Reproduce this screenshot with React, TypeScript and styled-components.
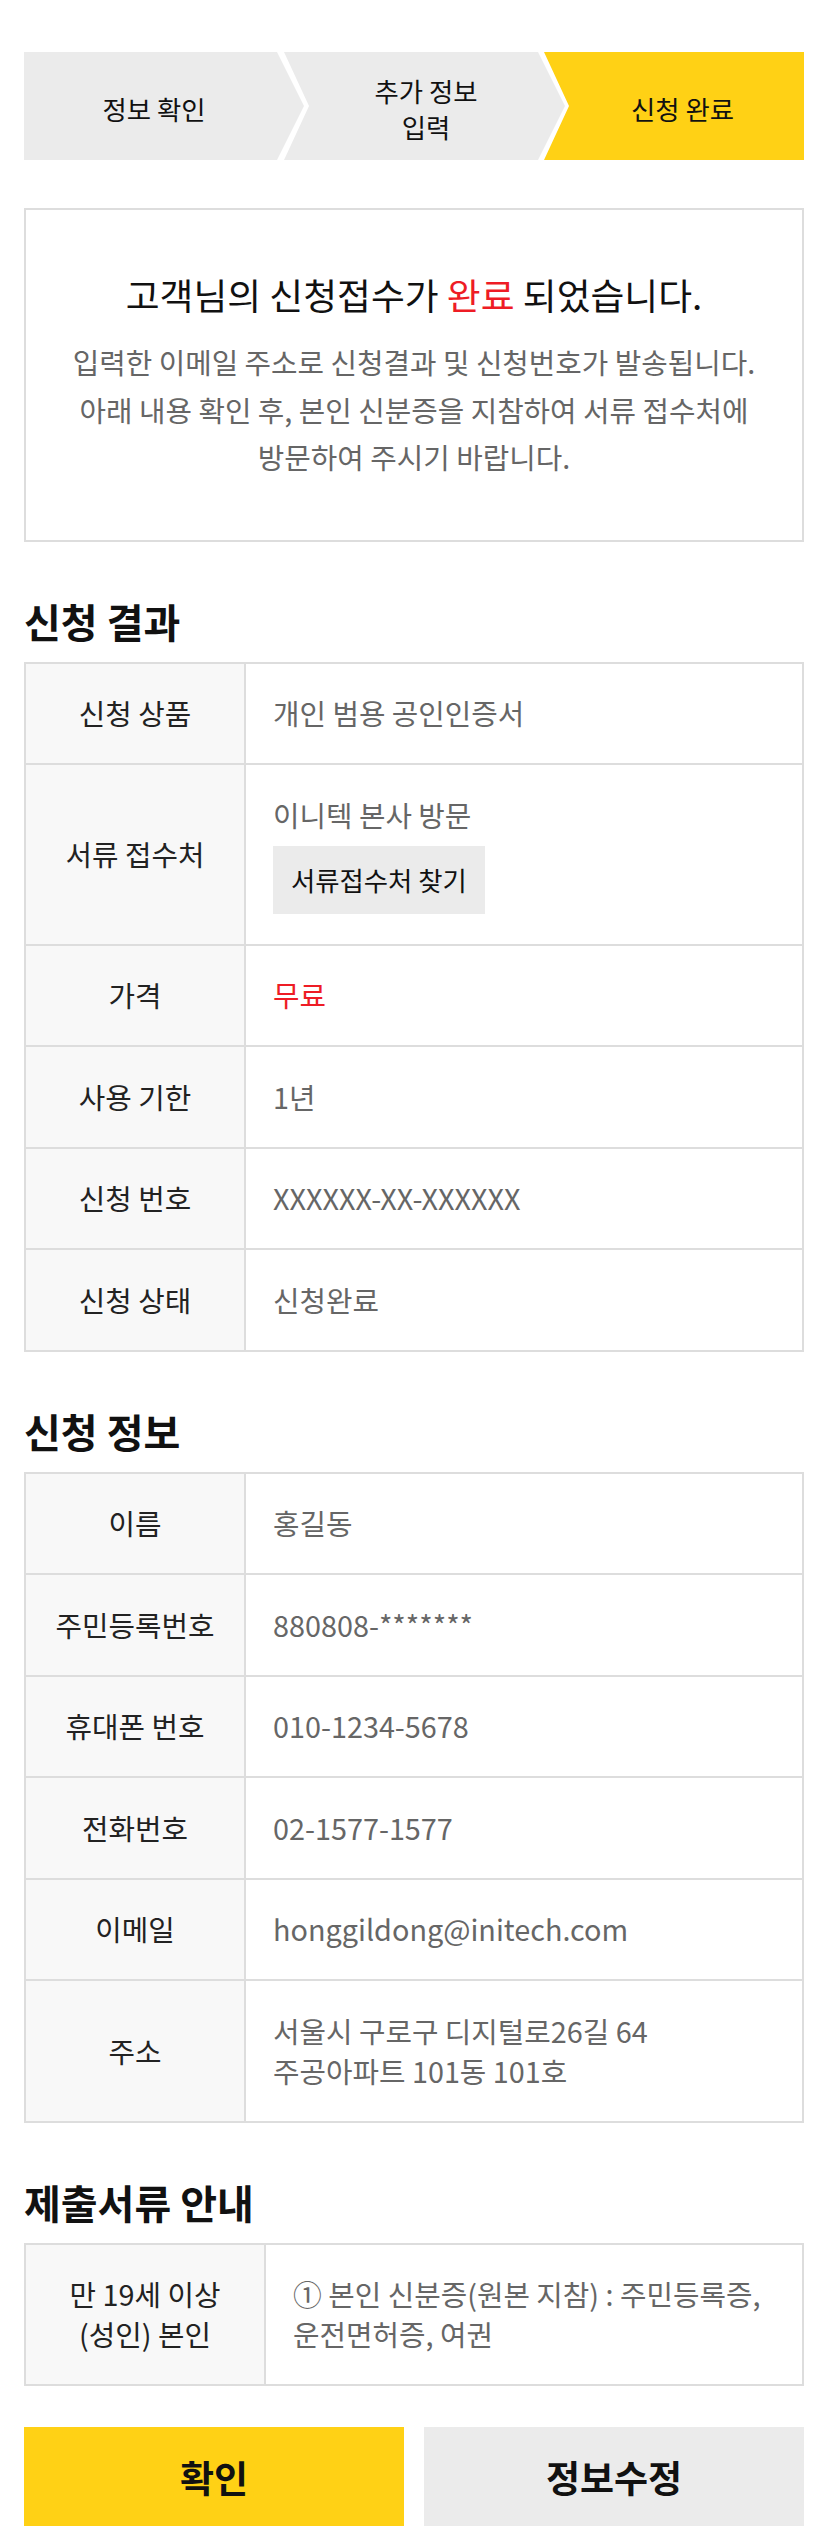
import React from "react";
import styled, { createGlobalStyle, css } from "styled-components";

const GlobalStyle = createGlobalStyle`
  html, body {
    margin: 0;
    padding: 0;
    background: #ffffff;
  }
  body {
    font-family: "Noto Sans CJK KR", "Noto Sans", sans-serif;
    color: #111;
  }
  * { box-sizing: border-box; }
`;

const Page = styled.main`
  width: 828px;
  padding: 52px 24px 0;
`;

/* ---------- step indicator ---------- */
const Steps = styled.ol`
  display: flex;
  height: 108px;
  margin: 0;
  padding: 0;
  list-style: none;
`;

type StepKind = "first" | "middle" | "last";

const clipFor = (kind: StepKind) => {
  if (kind === "first")
    return "polygon(0 0, 253px 0, 280px 50%, 253px 100%, 0 100%)";
  if (kind === "middle")
    return "polygon(0 0, 254px 0, 281px 50%, 254px 100%, 0 100%, 25px 50%)";
  return "polygon(0 0, 100% 0, 100% 100%, 0 100%, 25px 50%)";
};

const stepPadLeft: Record<StepKind, string> = {
  first: "0",
  middle: "24px",
  last: "17px",
};

const Step = styled.li<{ $kind: StepKind; $active?: boolean }>`
  flex: 0 0 ${(p) => (p.$kind === "last" ? "260px" : "281px")};
  margin-right: ${(p) => (p.$kind === "last" ? "0" : "-21px")};
  display: flex;
  align-items: center;
  justify-content: center;
  padding: 6px ${(p) => (p.$kind === "last" ? "0" : "21px")} 0
    ${(p) => stepPadLeft[p.$kind]};
  background: ${(p) => (p.$active ? "#ffd115" : "#ebebeb")};
  clip-path: ${(p) => clipFor(p.$kind)};
  font-size: 26.4px;
  line-height: 36px;
  color: #111;
  text-align: center;
`;

/* ---------- completion message ---------- */
const MessageBox = styled.section`
  margin-top: 48px;
  border: 2px solid #dddddd;
  padding: 60px 16px 59px;
  text-align: center;
`;

const MessageTitle = styled.h1`
  margin: 0 0 20px;
  font-size: 36.8px;
  line-height: 48px;
  font-weight: 400;
  color: #111;
`;

const Red = styled.span`
  color: #ee1c25;
`;

const MessageText = styled.p`
  margin: 0;
  font-size: 28.8px;
  line-height: 47.5px;
  color: #666;
`;

/* ---------- sections & tables ---------- */
const Section = styled.section`
  margin-top: 54px;
`;

const SectionTitle = styled.h2`
  margin: 0 0 16px;
  font-size: 40px;
  line-height: 50px;
  font-weight: 700;
  color: #111;
`;

const InfoTable = styled.div`
  border-top: 2px solid #dddddd;
  border-left: 2px solid #dddddd;
`;

const Row = styled.div<{ $labelWidth: number }>`
  display: grid;
  grid-template-columns: ${(p) => p.$labelWidth}px 1fr;
`;

const cellBase = css`
  border-right: 2px solid #dddddd;
  border-bottom: 2px solid #dddddd;
  padding-top: 29.75px;
  padding-bottom: 29.75px;
  font-size: 28.8px;
  line-height: 40px;
`;

const Label = styled.div`
  ${cellBase};
  display: flex;
  align-items: center;
  justify-content: center;
  padding-left: 6px;
  padding-right: 6px;
  background: #f8f8f8;
  color: #222;
  text-align: center;
`;

const Value = styled.div<{ $tone?: "red" }>`
  ${cellBase};
  display: flex;
  flex-direction: column;
  justify-content: center;
  align-items: flex-start;
  padding-left: 27px;
  padding-right: 12px;
  color: ${(p) => (p.$tone === "red" ? "#ee1c25" : "#666")};
`;

const FindButton = styled.button`
  margin-top: 11px;
  height: 68px;
  padding: 0 18px;
  border: none;
  background: #ebebeb;
  font-family: inherit;
  font-size: 26.4px;
  color: #111;
  cursor: pointer;
`;

/* ---------- bottom actions ---------- */
const Actions = styled.div`
  display: grid;
  grid-template-columns: 1fr 1fr;
  gap: 20px;
  margin-top: 41px;
`;

const ActionButton = styled.button<{ $primary?: boolean }>`
  height: 100px;
  border: none;
  background: ${(p) => (p.$primary ? "#ffd115" : "#ebebeb")};
  font-family: inherit;
  font-size: 37px;
  font-weight: 700;
  color: #111;
  cursor: pointer;
`;

type Item = { label: React.ReactNode; value: React.ReactNode; tone?: "red" };

const resultItems: Item[] = [
  { label: "신청 상품", value: "개인 범용 공인인증서" },
  {
    label: "서류 접수처",
    value: (
      <>
        <span>이니텍 본사 방문</span>
        <FindButton type="button">서류접수처 찾기</FindButton>
      </>
    ),
  },
  { label: "가격", value: "무료", tone: "red" },
  { label: "사용 기한", value: "1년" },
  { label: "신청 번호", value: "XXXXXX-XX-XXXXXX" },
  { label: "신청 상태", value: "신청완료" },
];

const infoItems: Item[] = [
  { label: "이름", value: "홍길동" },
  { label: "주민등록번호", value: "880808-*******" },
  { label: "휴대폰 번호", value: "010-1234-5678" },
  { label: "전화번호", value: "02-1577-1577" },
  { label: "이메일", value: "honggildong@initech.com" },
  {
    label: "주소",
    value: (
      <span>
        서울시 구로구 디지털로26길 64
        <br />
        주공아파트 101동 101호
      </span>
    ),
  },
];

const docItems: Item[] = [
  {
    label: (
      <span>
        만 19세 이상
        <br />
        (성인) 본인
      </span>
    ),
    value: (
      <span>
        ① 본인 신분증(원본 지참) : 주민등록증,
        <br />
        운전면허증, 여권
      </span>
    ),
  },
];

const Table = ({ items, labelWidth }: { items: Item[]; labelWidth: number }) => (
  <InfoTable>
    {items.map((it, i) => (
      <Row key={i} $labelWidth={labelWidth}>
        <Label>{it.label}</Label>
        <Value $tone={it.tone}>{it.value}</Value>
      </Row>
    ))}
  </InfoTable>
);

export default function App() {
  return (
    <>
      <GlobalStyle />
      <Page>
        <Steps>
          <Step $kind="first">정보 확인</Step>
          <Step $kind="middle">
            추가 정보
            <br />
            입력
          </Step>
          <Step $kind="last" $active>
            신청 완료
          </Step>
        </Steps>

        <MessageBox>
          <MessageTitle>
            고객님의 신청접수가 <Red>완료</Red> 되었습니다.
          </MessageTitle>
          <MessageText>
            입력한 이메일 주소로 신청결과 및 신청번호가 발송됩니다.
            <br />
            아래 내용 확인 후, 본인 신분증을 지참하여 서류 접수처에
            <br />
            방문하여 주시기 바랍니다.
          </MessageText>
        </MessageBox>

        <Section>
          <SectionTitle>신청 결과</SectionTitle>
          <Table items={resultItems} labelWidth={220} />
        </Section>

        <Section>
          <SectionTitle>신청 정보</SectionTitle>
          <Table items={infoItems} labelWidth={220} />
        </Section>

        <Section>
          <SectionTitle>제출서류 안내</SectionTitle>
          <Table items={docItems} labelWidth={240} />
        </Section>

        <Actions>
          <ActionButton type="button" $primary>
            확인
          </ActionButton>
          <ActionButton type="button">정보수정</ActionButton>
        </Actions>
      </Page>
    </>
  );
}
